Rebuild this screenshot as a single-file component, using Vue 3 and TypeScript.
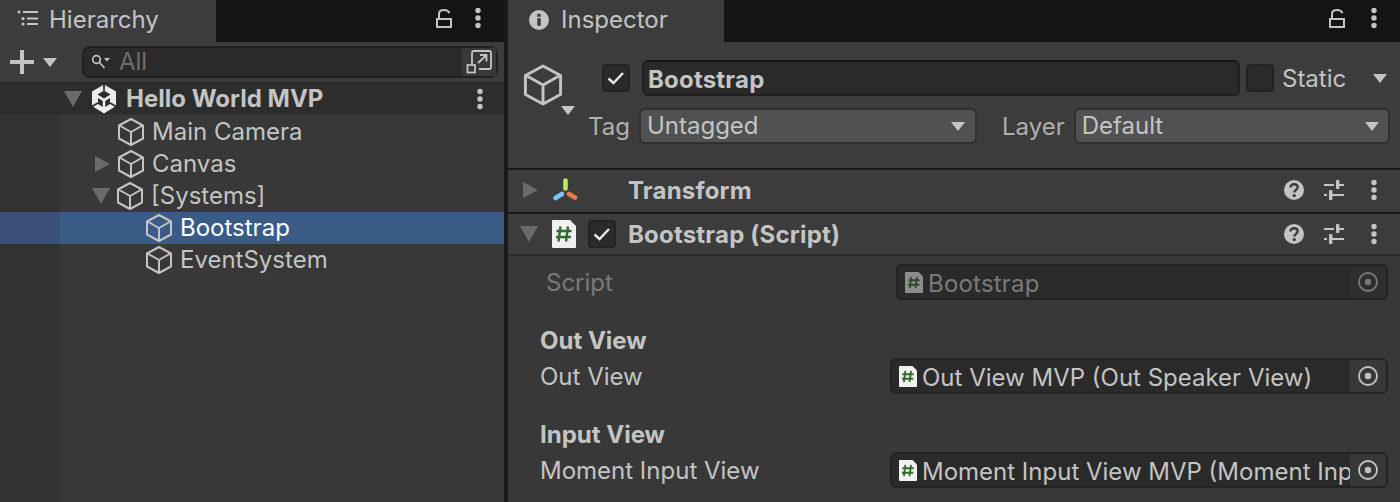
<template>
  <div class="editor">
    <svg class="defs" width="0" height="0">
      <symbol id="cube" viewBox="0 0 28 30">
        <path d="M14 2 L26 8.5 V21.5 L14 28 L2 21.5 V8.5 Z M2.5 8.5 L14 15 L25.5 8.5 M14 15 V27.5" fill="none" stroke="currentColor" stroke-width="2" stroke-linejoin="round" />
      </symbol>
      <symbol id="dots" viewBox="0 0 8 22">
        <circle cx="4" cy="3.5" r="2.7" fill="currentColor" />
        <circle cx="4" cy="11" r="2.7" fill="currentColor" />
        <circle cx="4" cy="18.5" r="2.7" fill="currentColor" />
      </symbol>
      <symbol id="lock" viewBox="0 0 18 22">
        <path d="M2 12 H16 V20 H2 Z M4 12 V7 Q4 3 9 3 Q13 3 14.5 6" fill="none" stroke="currentColor" stroke-width="2" />
      </symbol>
      <symbol id="script" viewBox="0 0 24 28">
        <path d="M0 1 Q0 0 1 0 H18 L24 6 V27 Q24 28 23 28 H1 Q0 28 0 27 Z" fill="currentColor" />
        <path d="M8.5 6.5 L6.5 21.5 M16 6.5 L14 21.5 M4.5 11 H19.5 M4 17 H19" fill="none" stroke="#2f6a2c" stroke-width="2.4" />
      </symbol>
      <symbol id="help" viewBox="0 0 20 20">
        <circle cx="10" cy="10" r="10" fill="currentColor" />
        <path d="M6.4 7.6 C6.4 5.4 8 4.2 10 4.2 C12.2 4.2 13.7 5.5 13.7 7.3 C13.7 9.7 10.3 10 10.3 12.4" fill="none" stroke="#3c3c3c" stroke-width="2.4" />
        <circle cx="10.2" cy="15.6" r="1.7" fill="#3c3c3c" />
      </symbol>
      <symbol id="sliders" viewBox="0 0 20 20">
        <path d="M0 5 H10 M15 5 H20 M0 15 H3 M8 15 H20" fill="none" stroke="currentColor" stroke-width="2" />
        <rect x="12" y="0" width="3.4" height="9" rx="1" fill="currentColor" />
        <rect x="5" y="10" width="3.4" height="10" rx="1" fill="currentColor" />
      </symbol>
      <symbol id="target" viewBox="0 0 20 20">
        <circle cx="10" cy="10" r="9" fill="none" stroke="currentColor" stroke-width="1.8" />
        <circle cx="10" cy="10" r="3.2" fill="currentColor" />
      </symbol>
      <symbol id="check" viewBox="0 0 18 14">
        <path d="M1.5 7.5 L6.5 12 L16 2" fill="none" stroke="currentColor" stroke-width="2.4" />
      </symbol>
    </svg>

    <section class="panel hierarchy">
      <div class="tabstrip">
        <div class="tab hier-tab">
          <svg class="list-icon" width="22" height="16" viewBox="0 0 22 16">
            <circle cx="2" cy="2" r="1.6" fill="#c4c4c4" />
            <circle cx="6" cy="8.5" r="1.6" fill="#c4c4c4" />
            <circle cx="6" cy="14" r="1.6" fill="#c4c4c4" />
            <path d="M6 2 H21 M10 8.5 H21 M10 14 H21" stroke="#c4c4c4" stroke-width="2" />
          </svg>
          <span>Hierarchy</span>
        </div>
        <div class="tab-actions">
          <svg class="lock" width="18" height="22"><use href="#lock" /></svg>
          <svg class="dots" width="8" height="22"><use href="#dots" /></svg>
        </div>
      </div>

      <div class="toolbar">
        <svg class="plus" width="24" height="24" viewBox="0 0 24 24">
          <path d="M0 12 H24 M12 0 V24" stroke="#c4c4c4" stroke-width="4" />
        </svg>
        <i class="caret caret-plus"></i>
        <div class="search">
          <svg class="mag" width="20" height="16" viewBox="0 0 20 16">
            <circle cx="5.5" cy="5.5" r="3.8" fill="none" stroke="#c4c4c4" stroke-width="1.7" />
            <path d="M8.5 8.5 L13.5 14" stroke="#c4c4c4" stroke-width="1.7" />
            <path d="M13 4 H19 L16 7.5 Z" fill="#c4c4c4" />
          </svg>
          <span class="search-text">All</span>
          <div class="search-btn">
            <svg width="26" height="26" viewBox="0 0 26 26">
              <path d="M6 15 V4 Q6 2 8 2 H23 Q25 2 25 4 V18 Q25 20 23 20 H13 M12 14 L20 6.5 M14 6 H20.5 V12.5" fill="none" stroke="#c4c4c4" stroke-width="1.8" />
              <rect x="1.5" y="16" width="7.5" height="7.5" fill="none" stroke="#c4c4c4" stroke-width="1.8" />
            </svg>
          </div>
        </div>
      </div>

      <div class="scene-row">
        <i class="arrow-down scene-arrow"></i>
        <svg class="unity" width="26" height="30" viewBox="0 0 26 30">
          <path d="M13 0.5 L25 7.5 V22 L13 29.5 L1 22 V7.5 Z" fill="#ececec" />
          <path d="M13 6.5 L19.5 10.5 L13 14.5 L6.5 10.5 Z M7 14 L11.8 17 V23 L7 20 Z M19 14 L14.2 17 V23 L19 20 Z" fill="#2d2d2d" />
          <path d="M13 0 V6.5 M0 23 L7 19 M26 23 L19 19" fill="none" stroke="#2d2d2d" stroke-width="1.8" />
        </svg>
        <span class="scene-name">Hello World MVP</span>
        <svg class="dots scene-dots" width="8" height="22"><use href="#dots" /></svg>
      </div>

      <div class="tree">
        <div
          v-for="row in rows"
          :key="row.name"
          class="tree-row"
          :class="{ selected: row.selected }"
        >
          <div class="gutter"></div>
          <div class="tree-cell" :style="{ paddingLeft: row.indent + 'px' }">
            <i v-if="row.arrow === 'right'" class="arrow-right"></i>
            <i v-else-if="row.arrow === 'down'" class="arrow-down"></i>
            <i v-else class="no-arrow"></i>
            <svg class="cube" width="28" height="30"><use href="#cube" /></svg>
            <span class="tree-label">{{ row.name }}</span>
          </div>
        </div>
      </div>
    </section>

    <section class="panel inspector">
      <div class="tabstrip">
        <div class="tab insp-tab">
          <svg width="20" height="20" viewBox="0 0 20 20">
            <circle cx="10" cy="10" r="10" fill="#c4c4c4" />
            <rect x="8.3" y="8.2" width="3.4" height="7.6" fill="#3c3c3c" />
            <rect x="8.3" y="3.8" width="3.4" height="3" fill="#3c3c3c" />
          </svg>
          <span>Inspector</span>
        </div>
        <div class="tab-actions">
          <svg class="lock" width="18" height="22"><use href="#lock" /></svg>
          <svg class="dots" width="8" height="22"><use href="#dots" /></svg>
        </div>
      </div>

      <div class="object-head">
        <div class="object-top">
          <div class="object-icon">
            <svg class="big-cube" width="42" height="44" viewBox="0 0 28 30"><use href="#cube" /></svg>
            <i class="caret object-caret"></i>
          </div>
          <label class="checkbox on">
            <svg width="18" height="14"><use href="#check" /></svg>
          </label>
          <div class="name-field">Bootstrap</div>
          <label class="checkbox"></label>
          <span class="static-label">Static</span>
          <i class="caret static-caret"></i>
        </div>
        <div class="object-bottom">
          <span class="tag-label">Tag</span>
          <div class="dropdown tag-drop"><span>Untagged</span><i class="caret"></i></div>
          <span class="layer-label">Layer</span>
          <div class="dropdown layer-drop"><span>Default</span><i class="caret"></i></div>
        </div>
      </div>

      <div class="comp-row transform-row">
        <i class="arrow-right comp-arrow"></i>
        <svg class="axes" width="26" height="24" viewBox="0 0 26 24">
          <path d="M13.5 2.5 V10.5" stroke="#bbe85e" stroke-width="4.6" stroke-linecap="round" />
          <path d="M10 16 L3.5 20" stroke="#7cc4f5" stroke-width="4.6" stroke-linecap="round" />
          <path d="M17 16 L23 19.5" stroke="#e97a4c" stroke-width="4.6" stroke-linecap="round" />
        </svg>
        <span class="comp-title transform-title">Transform</span>
        <div class="comp-actions">
          <svg class="help" width="20" height="20"><use href="#help" /></svg>
          <svg class="sliders" width="20" height="20"><use href="#sliders" /></svg>
          <svg class="dots" width="8" height="22"><use href="#dots" /></svg>
        </div>
      </div>

      <div class="comp-row script-row">
        <i class="arrow-down comp-arrow"></i>
        <svg class="script-icon" width="24" height="28"><use href="#script" /></svg>
        <label class="checkbox on">
          <svg width="18" height="14"><use href="#check" /></svg>
        </label>
        <span class="comp-title">Bootstrap (Script)</span>
        <div class="comp-actions">
          <svg class="help" width="20" height="20"><use href="#help" /></svg>
          <svg class="sliders" width="20" height="20"><use href="#sliders" /></svg>
          <svg class="dots" width="8" height="22"><use href="#dots" /></svg>
        </div>
      </div>

      <div class="comp-body">
        <div class="prop script-prop">
          <span class="prop-label">Script</span>
          <div class="obj-field">
            <svg class="field-script" width="18" height="21" viewBox="0 0 24 28"><use href="#script" /></svg>
            <span class="obj-text">Bootstrap</span>
            <div class="obj-target"><svg width="20" height="20"><use href="#target" /></svg></div>
          </div>
        </div>
        <template v-for="group in groups" :key="group.header">
          <div class="group-head">{{ group.header }}</div>
          <div class="prop">
            <span class="prop-label">{{ group.label }}</span>
            <div class="obj-field">
              <svg class="field-script" width="18" height="21" viewBox="0 0 24 28"><use href="#script" /></svg>
              <span class="obj-text">{{ group.value }}</span>
              <div class="obj-target"><svg width="20" height="20"><use href="#target" /></svg></div>
            </div>
          </div>
        </template>
      </div>
    </section>
  </div>
</template>

<script setup lang="ts">
type TreeRow = {
  name: string;
  indent: number;
  arrow?: "right" | "down";
  selected?: boolean;
};

const rows: TreeRow[] = [
  { name: "Main Camera", indent: 33 },
  { name: "Canvas", indent: 33, arrow: "right" },
  { name: "[Systems]", indent: 33, arrow: "down" },
  { name: "Bootstrap", indent: 61, selected: true },
  { name: "EventSystem", indent: 61 },
];

const groups = [
  { header: "Out View", label: "Out View", value: "Out View MVP (Out Speaker View)" },
  { header: "Input View", label: "Moment Input View", value: "Moment Input View MVP (Moment Input View)" },
];
</script>

<style>
html,
body {
  margin: 0;
  background: #191919;
}
</style>

<style scoped>
.editor {
  display: flex;
  gap: 4px;
  width: 1400px;
  height: 502px;
  overflow: hidden;
  background: #191919;
  color: #c4c4c4;
  font-family: Inter, "Noto Sans", sans-serif;
  font-size: 24px;
  line-height: 32px;
}
.defs {
  position: absolute;
}
.panel {
  display: flex;
  flex-direction: column;
  min-width: 0;
}
.hierarchy {
  width: 504px;
  flex: none;
  background: #383838;
}
.inspector {
  flex: 1;
  background: #383838;
}
.tabstrip {
  display: flex;
  justify-content: space-between;
  height: 42px;
  flex: none;
  background: #141414;
}
.tab {
  display: flex;
  align-items: center;
  width: 216px;
  padding-bottom: 2px;
  background: #3c3c3c;
  box-sizing: border-box;
}
.hier-tab {
  padding-left: 17px;
  gap: 10px;
}
.list-icon {
  margin-bottom: 4px;
}
.insp-tab {
  padding-left: 21px;
  gap: 12px;
}
.tab-actions {
  display: flex;
  align-items: center;
  gap: 24px;
  padding-right: 22px;
  padding-bottom: 6px;
}
.hierarchy .tab-actions {
  gap: 21px;
}
.toolbar {
  display: flex;
  align-items: center;
  height: 41px;
  flex: none;
  background: #3c3c3c;
  padding-left: 10px;
  border-bottom: 1px solid #232323;
  box-sizing: border-box;
}
.caret {
  display: block;
  width: 0;
  height: 0;
  border-left: 7.5px solid transparent;
  border-right: 7.5px solid transparent;
  border-top: 9px solid #c4c4c4;
}
.caret-plus {
  margin-left: 9px;
}
.search {
  display: flex;
  align-items: center;
  width: 416px;
  height: 32px;
  margin-left: 25px;
  box-sizing: border-box;
  border: 2px solid #212121;
  border-radius: 8px;
  background: #2a2a2a;
  padding-left: 7px;
}
.mag {
  flex: none;
}
.search-text {
  margin-left: 8px;
  color: #6e6e6e;
}
.search-btn {
  display: flex;
  align-items: center;
  justify-content: center;
  width: 34px;
  height: 28px;
  margin-left: auto;
  background: #383838;
}
.scene-row {
  display: flex;
  align-items: center;
  height: 32px;
  flex: none;
  background: #2d2d2d;
  padding-left: 64px;
  border-bottom: 1px solid #323232;
  box-sizing: border-box;
}
.unity {
  margin-left: 9px;
}
.scene-name {
  margin-left: 9px;
  font-weight: 700;
}
.scene-dots {
  margin-left: auto;
  margin-right: 20px;
}
.tree {
  display: flex;
  flex-direction: column;
  flex: 1;
  background: linear-gradient(90deg, #333333 60px, #383838 60px);
}
.tree-row {
  display: flex;
  height: 32px;
  flex: none;
}
.tree-row:first-child {
  margin-top: 1px;
}
.gutter {
  width: 60px;
  flex: none;
}
.tree-cell {
  display: flex;
  align-items: center;
  flex: 1;
}
.arrow-right {
  display: block;
  width: 0;
  height: 0;
  border-top: 8.5px solid transparent;
  border-bottom: 8.5px solid transparent;
  border-left: 15px solid #6b6b6b;
}
.arrow-down {
  display: block;
  width: 0;
  height: 0;
  border-left: 9px solid transparent;
  border-right: 9px solid transparent;
  border-top: 16px solid #6b6b6b;
}
.tree-cell .arrow-down {
  margin-left: -1px;
  margin-right: 7px;
}
.no-arrow {
  width: 18px;
  margin-right: 7px;
}
.tree-cell .arrow-right {
  margin-left: 2px;
  margin-right: 8px;
}
.tree-label {
  margin-left: 7px;
  line-height: 31px;
  height: 32px;
}
.cube {
  margin-left: -1px;
}
.tree-row.selected {
  background: #3a5b85;
  color: #fff;
}
.tree-row.selected .gutter {
  background: #3b4f78;
}
.tree-row.selected .cube {
  color: #c4c4c4;
}
.object-head {
  height: 128px;
  flex: none;
  background: #3c3c3c;
  padding: 0 10px 0 14px;
  box-sizing: border-box;
  border-bottom: 2px solid #1a1a1a;
}
.object-top {
  display: flex;
  align-items: center;
  height: 36px;
  margin-top: 18px;
  position: relative;
}
.object-icon {
  position: relative;
  width: 42px;
  height: 44px;
  margin-top: 14px;
  margin-right: 38px;
  flex: none;
}
.big-cube {
  display: block;
}
.object-caret {
  position: absolute;
  right: -11px;
  bottom: -8px;
}
.checkbox {
  display: flex;
  align-items: center;
  justify-content: center;
  width: 28px;
  height: 28px;
  flex: none;
  box-sizing: border-box;
  border: 2px solid #232323;
  border-radius: 4px;
  background: #2a2a2a;
  color: #e8e8e8;
}
.name-field {
  width: 598px;
  height: 36px;
  margin-left: 12px;
  margin-right: 6px;
  padding-left: 4px;
  box-sizing: border-box;
  flex: none;
  border: 2px solid #212121;
  border-top-color: #151515;
  border-radius: 6px;
  background: #2a2a2a;
  font-weight: 700;
  line-height: 36px;
  letter-spacing: 0.2px;
}
.static-label {
  margin-left: 8px;
  padding-top: 2px;
}
.static-caret {
  margin-left: 27px;
}
.object-bottom {
  display: flex;
  align-items: center;
  height: 36px;
  margin-top: 12px;
}
.tag-label {
  margin-left: 66px;
  padding-top: 2px;
  color: #b0b0b0;
}
.layer-label {
  margin-left: 25px;
  padding-top: 2px;
  color: #b0b0b0;
}
.dropdown {
  display: flex;
  align-items: center;
  justify-content: space-between;
  height: 36px;
  box-sizing: border-box;
  padding: 0 10px 0 6px;
  border: 2px solid #303030;
  border-radius: 6px;
  background: #515151;
  flex: none;
}
.tag-drop {
  width: 338px;
  margin-left: 9px;
}
.layer-drop {
  width: 316px;
  margin-left: 9px;
  padding-right: 9px;
}
.comp-row {
  display: flex;
  align-items: center;
  flex: none;
  background: #3c3c3c;
  box-sizing: border-box;
}
.transform-row {
  height: 44px;
  padding-bottom: 2px;
  border-bottom: 2px solid #1a1a1a;
}
.script-row {
  height: 42px;
  border-bottom: 2px solid #2d2d2d;
}
.comp-arrow {
  margin-left: 15px;
}
.transform-row .axes {
  margin-left: 14px;
}
.transform-title {
  margin-left: 50px;
}
.script-row .comp-arrow {
  margin-left: 12px;
}
.script-icon {
  margin-left: 14px;
  color: #f0f0f0;
}
.script-row .checkbox {
  margin-left: 12px;
}
.script-row .comp-title {
  margin-left: 12px;
}
.comp-title {
  padding-top: 2px;
  font-weight: 700;
  letter-spacing: 0.2px;
}
.comp-actions {
  display: flex;
  align-items: center;
  margin-left: auto;
  padding-right: 22px;
}
.sliders {
  margin-left: 20px;
}
.comp-actions .dots {
  margin-left: 26px;
}
.comp-body {
  display: flex;
  flex-direction: column;
  flex: 1;
  padding: 8px 12px 0 32px;
}
.prop {
  display: flex;
  align-items: center;
  justify-content: space-between;
  height: 36px;
  flex: none;
}
.script-prop {
  padding-left: 6px;
  color: #7a7a7a;
  margin-bottom: 24px;
}
.group-head {
  height: 32px;
  margin-bottom: 2px;
  font-weight: 700;
  line-height: 34px;
  flex: none;
}
.group-head ~ .group-head {
  margin-top: 24px;
}
.prop-label {
  padding-top: 2px;
  white-space: nowrap;
}
.obj-field {
  display: flex;
  align-items: center;
  width: 498px;
  height: 36px;
  padding-left: 7px;
  box-sizing: border-box;
  flex: none;
  border: 2px solid #232323;
  border-radius: 6px;
  background: #2a2a2a;
  overflow: hidden;
}
.script-prop .obj-field {
  width: 492px;
  color: #7a7a7a;
}
.field-script {
  color: #f0f0f0;
  flex: none;
}
.script-prop .field-script {
  opacity: 0.5;
}
.obj-text {
  margin-left: 5px;
  padding-top: 4px;
  white-space: nowrap;
  overflow: hidden;
  flex: 1;
  min-width: 0;
}
.script-prop .obj-text {
  letter-spacing: 0.2px;
}
.obj-target {
  display: flex;
  align-items: center;
  justify-content: center;
  width: 36px;
  height: 32px;
  flex: none;
  background: #383838;
  color: #c4c4c4;
}
.script-prop .obj-target {
  background: #2e2e2e;
  color: #7a7a7a;
}
</style>
